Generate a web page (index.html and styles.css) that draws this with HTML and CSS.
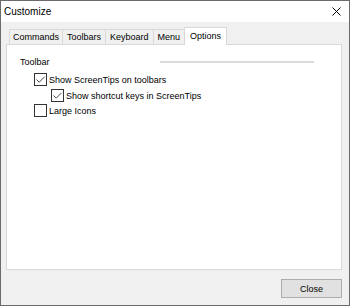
FILE: index.html
```html
<!DOCTYPE html>
<html lang="en">
<head>
    <meta charset="UTF-8">
    <title>Customize</title>
    <link rel="stylesheet" href="styles.css">
</head>
<body>
    <div class="window">
        <div class="titlebar">
            <span class="title">Customize</span>
            <svg class="close-x" width="9" height="9" viewBox="0 0 9 9">
                <path d="M0.5 0.5 L8.5 8.5 M8.5 0.5 L0.5 8.5" stroke="#000" stroke-width="1"/>
            </svg>
        </div>

        <div class="client">
            <div class="tabs">
                <div class="tab">Commands</div>
                <div class="tab">Toolbars</div>
                <div class="tab">Keyboard</div>
                <div class="tab">Menu</div>
                <div class="tab active">Options</div>
            </div>

            <div class="panel">
                <div class="group-head">
                    <span>Toolbar</span>
                    <span class="group-line"></span>
                </div>

                <label class="check-row">
                    <span class="box">
                        <svg width="11" height="11" viewBox="0 0 11 11"><path d="M1.5 5.5 L4.2 8.2 L9.7 2.7" fill="none" stroke="#4a4a4a" stroke-width="1"/></svg>
                    </span>
                    Show ScreenTips on toolbars
                </label>
                <label class="check-row sub">
                    <span class="box">
                        <svg width="11" height="11" viewBox="0 0 11 11"><path d="M1.5 5.5 L4.2 8.2 L9.7 2.7" fill="none" stroke="#4a4a4a" stroke-width="1"/></svg>
                    </span>
                    Show shortcut keys in ScreenTips
                </label>
                <label class="check-row">
                    <span class="box"></span>
                    Large Icons
                </label>
            </div>

            <div class="footer">
                <button class="btn">Close</button>
            </div>
        </div>
    </div>
</body>
</html>
```

FILE: styles.css
```css
* {
    margin: 0;
    padding: 0;
    box-sizing: border-box;
}

body {
    font-family: 'Liberation Sans', Arial, sans-serif;
    font-size: 9px;
    color: #000;
    background: #fff;
}

.window {
    width: 350px;
    height: 306px;
    border: 1px solid #6b6b6b;
    background: #f0f0f0;
    display: flex;
    flex-direction: column;
}

.titlebar {
    height: 21px;
    flex-shrink: 0;
    background: #fff;
    display: flex;
    align-items: center;
    justify-content: space-between;
    padding: 0 8px 0 3px;
}

.title {
    font-size: 10px;
}

.client {
    flex: 1;
    display: flex;
    flex-direction: column;
    padding: 5px 7px 7px 5px;
}

.tabs {
    height: 17px;
    flex-shrink: 0;
    display: flex;
    align-items: flex-end;
    padding-left: 3px;
}

.tab {
    height: 15px;
    line-height: 14px;
    padding: 0 4px;
    margin-right: -1px;
    border: 1px solid #d9d9d9;
    border-bottom: 0;
    background: #f0f0f0;
}

.tab:first-child {
    padding: 0 3px;
}

.tab.active {
    height: 18px;
    line-height: 16px;
    margin-bottom: -1px;
    padding: 0 5px;
    background: #fff;
    position: relative;
    z-index: 1;
}

.panel {
    flex: 1;
    border: 1px solid #d9d9d9;
    background: #fff;
    padding: 11px 0 0 13px;
}

.group-head {
    height: 11px;
    display: flex;
    align-items: center;
    justify-content: space-between;
    padding-right: 27px;
}

.group-line {
    width: 154px;
    height: 2px;
    background: #dadada;
}

.check-row {
    height: 13px;
    display: flex;
    align-items: center;
    margin: 2px 0 0 14px;
}

.group-head + .check-row {
    margin-top: 6px;
}

.check-row.sub {
    margin: 3px 0 0 31px;
}

.box {
    width: 13px;
    height: 13px;
    border: 1px solid #333;
    background: #fff;
    margin-right: 2px;
    display: flex;
    align-items: center;
    justify-content: center;
}

.footer {
    display: flex;
    justify-content: flex-end;
    margin-top: 9px;
}

.btn {
    width: 61px;
    height: 19px;
    border: 1px solid #adadad;
    background: #e1e1e1;
    font-family: inherit;
    font-size: 9px;
    color: #000;
}
```
